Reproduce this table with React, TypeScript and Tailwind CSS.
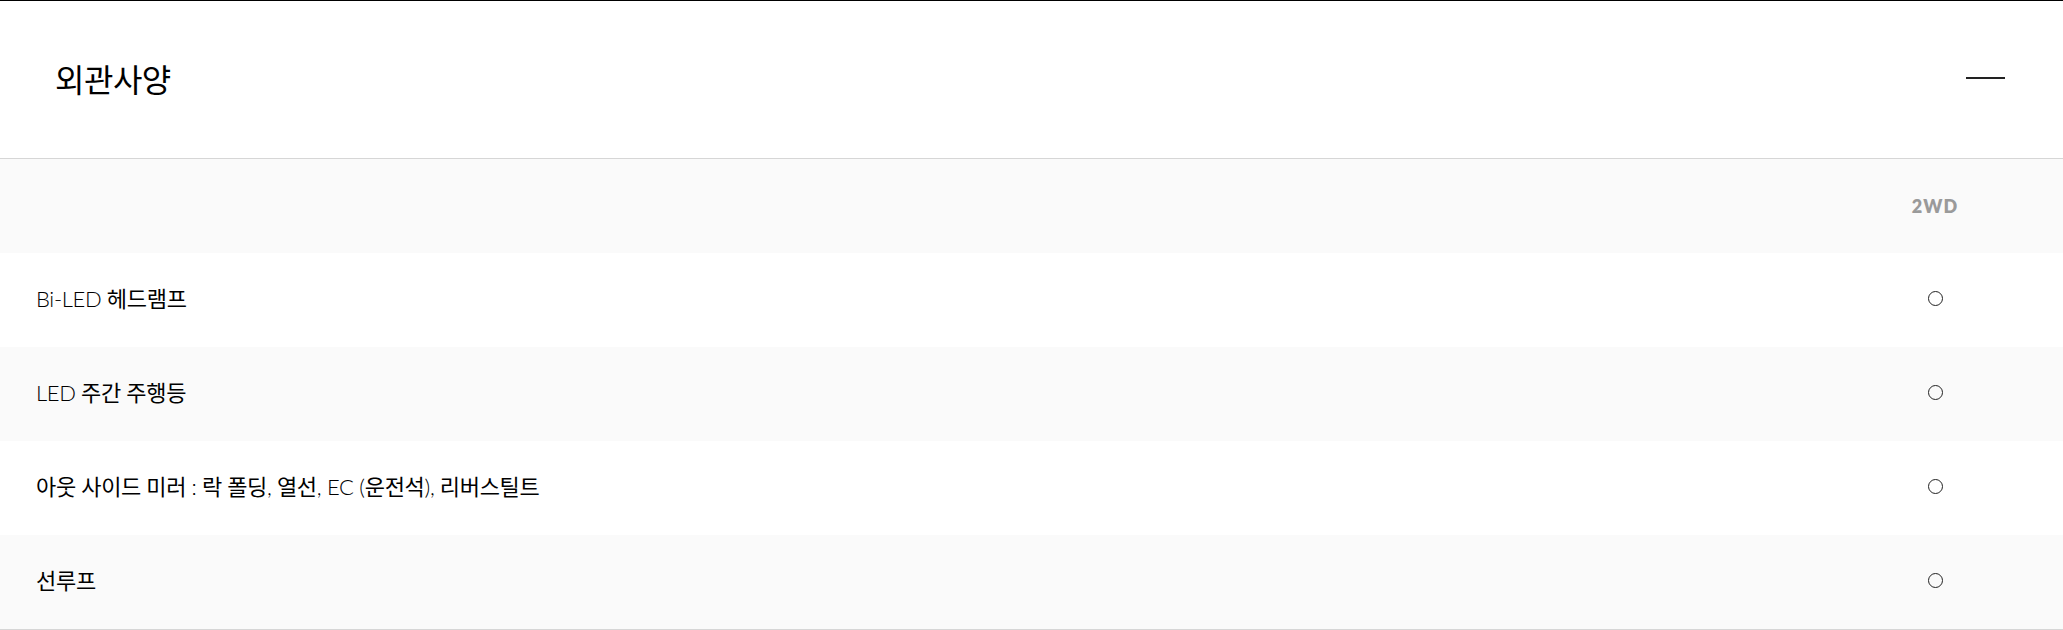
const rows: { label: React.ReactNode; value: string }[] = [
  {
    label: (
      <>
        <span className="font-light">Bi-LED</span> 헤드램프
      </>
    ),
    value: "○",
  },
  {
    label: (
      <>
        <span className="font-light">LED</span> 주간 주행등
      </>
    ),
    value: "○",
  },
  {
    label: (
      <>
        아웃 사이드 미러 <span className="font-light">:</span> 락 폴딩<span className="font-light">,</span> 열선
        <span className="font-light">, EC (</span>운전석<span className="font-light">),</span> 리버스틸트
      </>
    ),
    value: "○",
  },
  { label: "선루프", value: "○" },
];

const App = () => {
  return (
    <section
      className="w-full bg-white text-black"
      style={{ fontFamily: '"Lato", "Noto Sans CJK KR", sans-serif' }}
    >
      <div className="flex h-[159px] items-center justify-between border-t border-b border-t-black border-b-[#d6d6d6] pl-[55px] pr-[58px]">
        <h3 className="text-[32px] leading-none tracking-[-0.5px]">외관사양</h3>
        <button type="button" className="mb-[4px] flex h-10 w-10 items-center justify-center">
          <span className="block h-[2px] w-[39px] bg-[#222]" />
        </button>
      </div>
      <div className="grid grid-cols-[1fr_256px] border-b border-[#d6d6d6]">
        <div className="h-[94px] bg-[#fafafa]" />
        <div className="flex h-[94px] items-center justify-center bg-[#fafafa] text-[18px] font-extrabold tracking-[1px] text-[#9a9a9a]">
          2WD
        </div>
        {rows.map((row, i) => (
          <div key={i} className="contents">
            <div
              className={`flex h-[94px] items-center pl-[36px] text-[22px] tracking-[-0.3px] ${
                i % 2 === 1 ? "bg-[#fafafa]" : "bg-white"
              }`}
            >
              <span className="pb-[4px]">{row.label}</span>
            </div>
            <div
              className={`flex h-[94px] items-center justify-center ${
                i % 2 === 1 ? "bg-[#fafafa]" : "bg-white"
              }`}
            >
              <span
                className="mb-[3px] block h-[15px] w-[15px] rounded-full border-[1.5px] border-[#222]"
                aria-label={row.value}
              />
            </div>
          </div>
        ))}
      </div>
    </section>
  );
};

export default App;
